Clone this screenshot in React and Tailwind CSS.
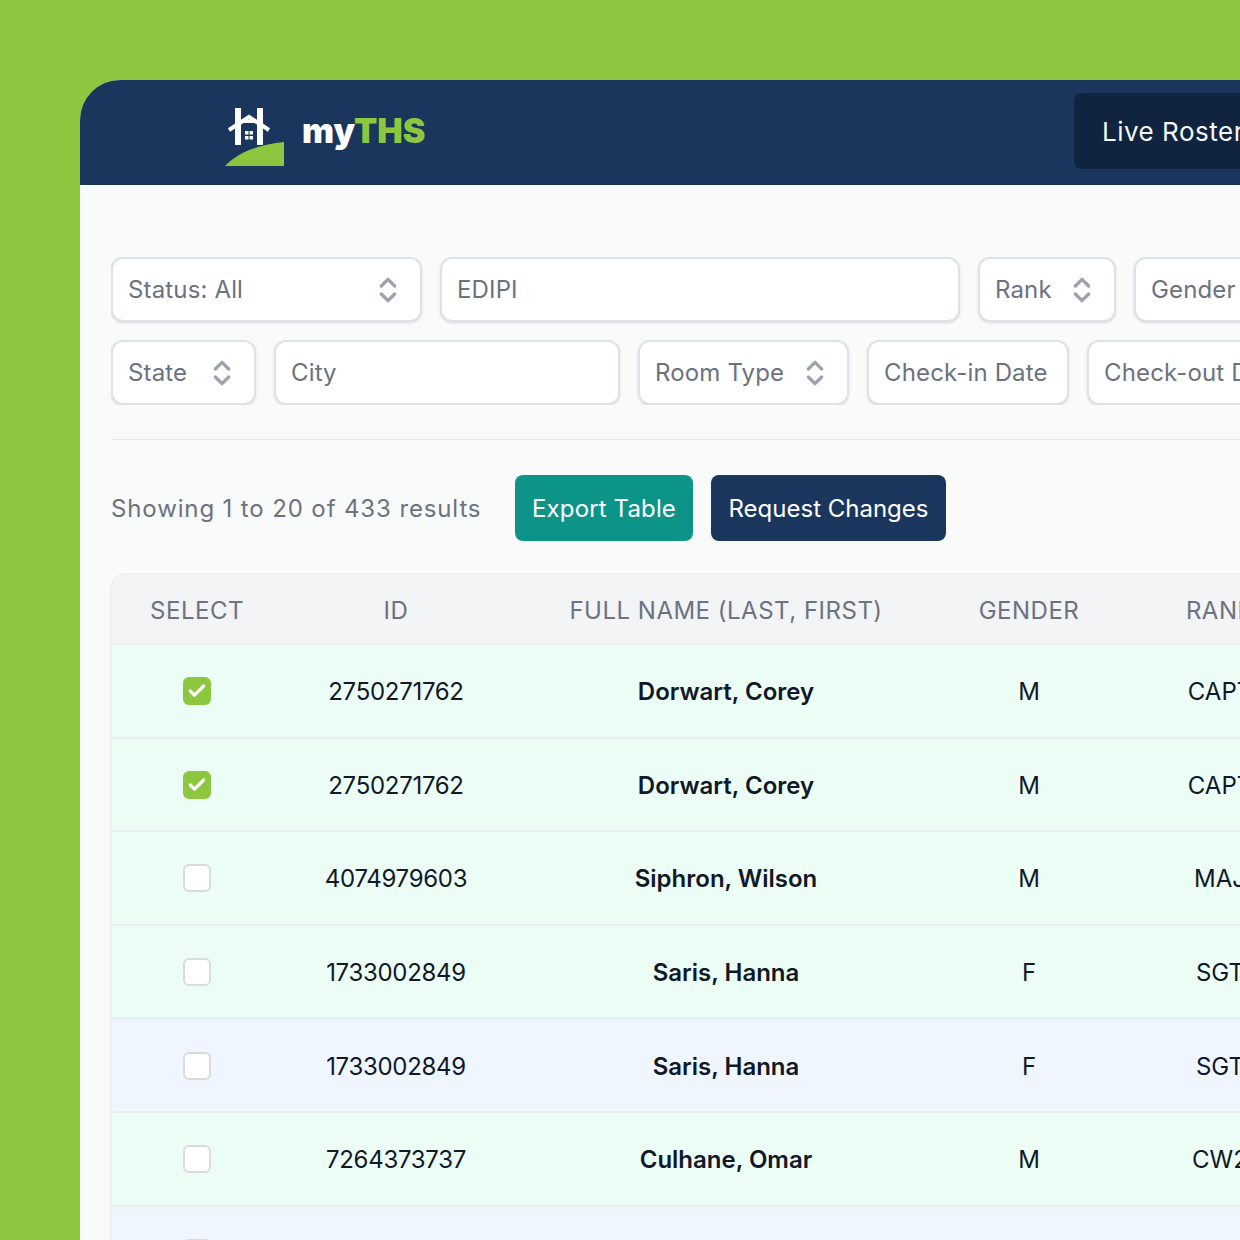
import React from 'react';
import { ChevronsUpDown, Check } from 'lucide-react';

const font = { fontFamily: '"Inter", "Noto Sans", sans-serif' };

const rows = [
  { id: '2750271762', name: 'Dorwart, Corey', gender: 'M', rank: 'CAPT', checked: true, bg: 'bg-[#ecfdf5]' },
  { id: '2750271762', name: 'Dorwart, Corey', gender: 'M', rank: 'CAPT', checked: true, bg: 'bg-[#ecfdf5]' },
  { id: '4074979603', name: 'Siphron, Wilson', gender: 'M', rank: 'MAJ', bg: 'bg-[#ecfdf5]' },
  { id: '1733002849', name: 'Saris, Hanna', gender: 'F', rank: 'SGT', bg: 'bg-[#ecfdf5]' },
  { id: '1733002849', name: 'Saris, Hanna', gender: 'F', rank: 'SGT', bg: 'bg-[#eff6ff]' },
  { id: '7264373737', name: 'Culhane, Omar', gender: 'M', rank: 'CW2', bg: 'bg-[#ecfdf5]' },
  { id: '', name: '', gender: '', rank: '', bg: 'bg-[#eff6ff]' },
];

const Logo = () => (
  <svg width="62" height="72" viewBox="0 0 62 72" fill="none" className="mb-[5px]">
    <path d="M11 14h6v37h-6zM33 14h6v37h-6zM17 26h16v3H17z" fill="#fff" />
    <path d="M5 36 25 23l20 13" stroke="#fff" strokeWidth="4" />
    <path d="M19 33 25 29l6 4v14H19z" fill="#1b365d" />
    <path d="M21 37h3.500v3.500H21zM25.500 37H29v3.500h-3.500zM21 42h3.500v3.500H21zM25.500 42H29v3.500h-3.500z" fill="#fff" />
    <path d="M1 72C14 58 34 51 60 48v24z" fill="#8dc63f" />
  </svg>
);

const Field = ({ label, select, width }) => (
  <div className={`h-[65px] shrink-0 flex items-center justify-between bg-white border-2 border-[#dfe2e6] shadow-sm rounded-xl pl-[15px] pr-[16px] ${width}`}>
    <span className="pt-[1px] text-[24px] text-[#6b7280] whitespace-nowrap tracking-[0.15px]">{label}</span>
    {select && <ChevronsUpDown size={32} strokeWidth={2.5} className="text-[#9ca3af] shrink-0" />}
  </div>
);

const Box = ({ checked }) =>
  checked ? (
    <div className="w-[28px] h-[28px] mt-[1px] rounded-md bg-[#8dc63f] flex items-center justify-center">
      <Check size={20} strokeWidth={4} className="text-white" />
    </div>
  ) : (
    <div className="w-[28px] h-[28px] mt-[1px] rounded-md bg-white border-2 border-[#d8dbdf]" />
  );

const cols = 'grid grid-cols-[170px_228px_432px_174px_208px] w-[1226px]';

export default function App() {
  return (
    <div style={font} className="w-[1240px] h-[1240px] overflow-hidden bg-[#8dc63f] pl-[80px] pt-[80px]">
      <div className="w-[1300px] h-[1300px] bg-[#f9fafa] rounded-tl-[40px] overflow-hidden">
        {/* header */}
        <div className="h-[105px] bg-[#1b365d] flex items-center justify-between pl-[144px]">
          <div className="flex items-center gap-[16px]">
            <Logo />
            <div className="text-[34px] font-black text-white mb-[4px]">
              my<span className="text-[#8dc63f]">THS</span>
            </div>
          </div>
          <div className="w-[300px] h-[76px] mr-[6px] mb-[3px] rounded-lg bg-[#10243f] text-[#f3f6fa] text-[26px] tracking-[0.5px] flex items-center pl-[28px]">
            Live Roster
          </div>
        </div>

        <div className="pl-[31px] pt-[72px]">
          {/* filters */}
          <div className="flex flex-col gap-[18px] w-[1300px] overflow-hidden">
            <div className="flex gap-[18px]">
              <Field label="Status: All" select width="w-[311px]" />
              <Field label="EDIPI" width="w-[520px]" />
              <Field label="Rank" select width="w-[138px]" />
              <Field label="Gender" width="w-[200px]" />
            </div>
            <div className="flex gap-[18px]">
              <Field label="State" select width="w-[145px]" />
              <Field label="City" width="w-[346px]" />
              <Field label="Room Type" select width="w-[211px]" />
              <Field label="Check-in Date" width="w-[202px]" />
              <Field label="Check-out Date" width="w-[200px]" />
            </div>
          </div>

          <div className="h-px bg-[#e5e7eb] mt-[34px]" />

          {/* actions */}
          <div className="flex items-center mt-[35px] h-[66px]">
            <span className="pt-[2px] text-[24px] text-[#6b7280] tracking-[0.87px] w-[404px] whitespace-nowrap">Showing 1 to 20 of 433 results</span>
            <button className="h-[66px] w-[178px] pt-[2px] rounded-lg bg-[#0d9488] text-white text-[24px] tracking-[0.13px]">Export Table</button>
            <button className="h-[66px] w-[235px] ml-[18px] pt-[2px] rounded-lg bg-[#1b365d] text-white text-[24px]">Request Changes</button>
          </div>

          {/* table */}
          <div className="mt-[32px] -ml-px w-[1226px] border-l-2 border-t-2 border-[#eef0f2] rounded-tl-2xl overflow-hidden">
            <div className={`${cols} h-[68px] pt-[4px] bg-[#f3f4f6] items-center text-center text-[24px] text-[#6b7280] tracking-[0.5px]`}>
              <div>SELECT</div>
              <div>ID</div>
              <div>FULL NAME (LAST, FIRST)</div>
              <div>GENDER</div>
              <div>RANK</div>
            </div>
            {rows.map((r, i) => (
              <div key={i} className={`${cols} h-[93.6px] ${r.bg} items-center text-center text-[24px] text-[#111827] border-t-2 border-[#e9eef0]`}>
                <div className="flex justify-center"><Box checked={r.checked} /></div>
                <div className="pt-[3px] tracking-[-0.3px]">{r.id}</div>
                <div className="pt-[3px] font-semibold">{r.name}</div>
                <div className="pt-[3px]">{r.gender}</div>
                <div className="pt-[3px]">{r.rank}</div>
              </div>
            ))}
          </div>
        </div>
      </div>
    </div>
  );
}
